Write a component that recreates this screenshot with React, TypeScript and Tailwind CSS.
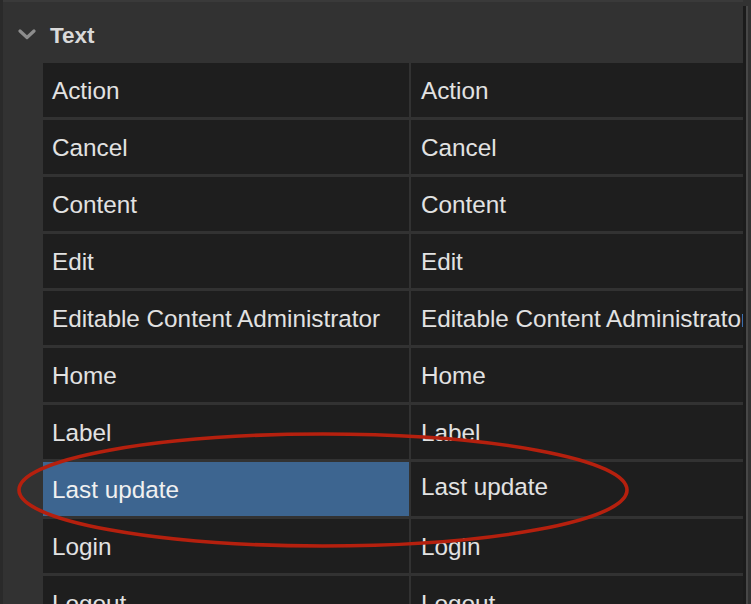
import React from "react";

const rows = [
  "Action",
  "Cancel",
  "Content",
  "Edit",
  "Editable Content Administrator",
  "Home",
  "Label",
  "Last update",
  "Login",
  "Logout",
];

export default function App() {
  return (
    <div
      className="relative w-[751px] h-[604px] overflow-hidden bg-[#323232] flex"
      style={{ fontFamily: '"Liberation Sans", Arial, sans-serif' }}
    >
      <div className="w-[3px] shrink-0 bg-[#2a2a2a]" />
      <div className="w-[740px] shrink-0 flex flex-col border-t-2 border-[#3a3a3a]">
        <div className="h-[61px] shrink-0 flex items-center pt-[6px]">
          <svg
            className="ml-[15px] mb-[2px]"
            width="18"
            height="11"
            viewBox="0 0 18 11"
            fill="none"
          >
            <polyline
              points="2,2 9,8.5 16,2"
              stroke="#8d8d8d"
              strokeWidth="3.2"
              strokeLinecap="round"
              strokeLinejoin="round"
            />
          </svg>
          <span className="ml-[14px] text-[22.5px] font-bold text-[#d9d9d9]">
            Text
          </span>
        </div>
        <div className="ml-[40px] grid grid-cols-[366px_332px] gap-x-[2px] gap-y-[3px]">
          {rows.map((r) => {
            const sel = r === "Last update";
            return (
              <React.Fragment key={r}>
                <div
                  className={`h-[54px] flex items-center pt-[3px] pl-[9px] whitespace-nowrap overflow-hidden text-[24.3px] ${
                    sel ? "bg-[#3d6590] text-[#f0f0f0]" : "bg-[#1e1e1e] text-[#e2e2e2]"
                  }`}
                >
                  {r}
                </div>
                <div
                  className={`h-[54px] flex items-center pl-[10px] whitespace-nowrap overflow-hidden text-[24.3px] text-[#e2e2e2] bg-[#1e1e1e] ${
                    sel ? "pb-[3px]" : "pt-[3px]"
                  }`}
                >
                  {r}
                </div>
              </React.Fragment>
            );
          })}
        </div>
      </div>
      <div className="flex pt-[6px]">
        <div className="w-[3px] bg-[#1b1b1b]" />
        <div className="w-[2px] bg-[#474747]" />
      </div>
      <svg
        className="absolute left-0 top-0 pointer-events-none"
        width="751"
        height="604"
      >
        <ellipse
          cx="323"
          cy="490"
          rx="304"
          ry="56"
          fill="none"
          stroke="#b5200e"
          strokeWidth="3.6"
        />
      </svg>
    </div>
  );
}
